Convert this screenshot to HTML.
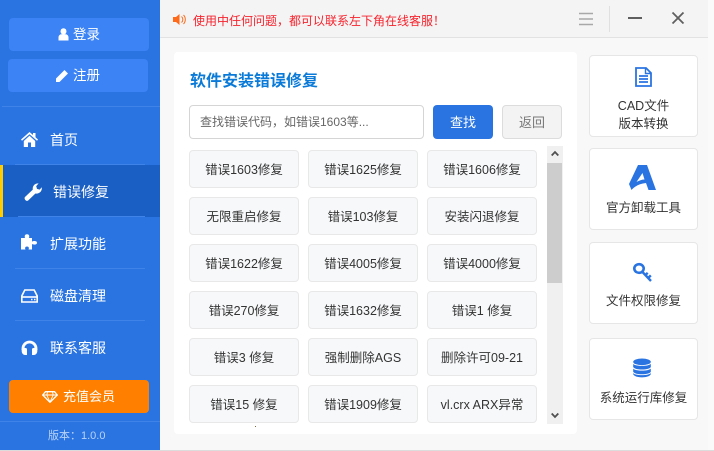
<!DOCTYPE html>
<html lang="zh">
<head>
<meta charset="utf-8">
<style>
*{box-sizing:border-box;margin:0;padding:0}
html,body{width:714px;height:451px;overflow:hidden;background:#f8f8f8;font-family:"Liberation Sans","Noto Sans CJK SC",sans-serif}
.a{position:absolute}
.t{position:absolute;white-space:nowrap;line-height:20px}
#side{left:0;top:0;width:160px;height:451px;background:#2a74e2}
.sb{position:absolute;background:#3c83f6;border-radius:4px;height:33px;width:140px}
.hr{position:absolute;height:1px;background:#3f82e8}
.nav{color:#fff;font-size:14px}
.g{position:absolute;width:110px;height:38px;background:#f7f8fa;border:1px solid #e8e8e8;border-radius:4px;font-size:12.5px;color:#333;text-align:center;line-height:38px;white-space:nowrap}
.c{position:absolute;left:589px;width:109px;height:82px;background:#fff;border:1px solid #e6e6e6;border-radius:4px}
.c div{position:absolute;left:0;width:107px;text-align:center;font-size:12.5px;line-height:17.5px;color:#333;white-space:nowrap}
svg{position:absolute}
</style>
</head>
<body>
<div id="side" class="a"></div>
<div class="sb" style="left:9px;top:18px"></div>
<div class="sb" style="left:8px;top:59px"></div>
<svg style="left:58px;top:28px" width="11" height="13" viewBox="0 0 11 13"><ellipse cx="5.5" cy="3.4" rx="3" ry="3.2" fill="#fff"/><path d="M.5 12.5V9.5C.5 7.5 2 6.5 3 6.3h5c1 .2 2.5 1.2 2.500 3.200v3z" fill="#fff"/></svg>
<div class="t" style="left:73px;top:25px;color:#fff;font-size:13.5px">登录</div>
<svg style="left:56px;top:69px" width="13" height="13" viewBox="0 0 13 13"><path d="M0 13V9.500L8.500 1 12 4.500 3.500 13zM9.300.3l3.400 3.400" fill="#fff"/></svg>
<div class="t" style="left:73px;top:66px;color:#fff;font-size:13.5px">注册</div>
<div class="hr" style="left:2px;top:106px;width:158px"></div>
<svg style="left:21px;top:132px" width="17" height="15" viewBox="0 0 17 15"><path d="M0 7.500L8.500 0 12 3V1h2.500v4.200L17 7.500l-1 1.200L8.500 2.300 1 8.700z" fill="#fff"/><path d="M2.800 9l5.700-5.200L14.200 9v6H10V10.500H7V15H2.800z" fill="#fff"/></svg>
<div class="t nav" style="left:50px;top:130px">首页</div>
<div class="hr" style="left:15px;top:164px;width:130px"></div>
<div class="a" style="left:0;top:165px;width:160px;height:52px;background:#1a5fc4"></div>
<div class="a" style="left:0;top:165px;width:3px;height:52px;background:#ffcc00"></div>
<svg style="left:24px;top:183px" width="18" height="18" viewBox="0 0 17 17"><path d="M.8 13.300L8.300 6.200C7.800 3 10 .2 13.800.3L11.500 3l.8 2.500 2.500.7L16.800 4c.5 3.800-2.300 6.500-6 5.900L3.800 16.700c-1.800 1-4-1.500-3-3.400z" fill="#fff"/></svg>
<div class="t nav" style="left:53px;top:182px">错误修复</div>
<div class="hr" style="left:18px;top:216px;width:127px"></div>
<svg style="left:20px;top:234px" width="18" height="16" viewBox="0 0 18 16"><path d="M1 4h4C4.500 2.500 4.500.3 7 .3S9.500 2.500 9 4H12v3.500c1.500-.8 5-1 5 1.300s-3.500 2-5 1.200V15.500H8.500c.8-1.500.3-3-1.500-3s-2.300 1.500-1.500 3H1z" fill="#fff"/></svg>
<div class="t nav" style="left:50px;top:234px">扩展功能</div>
<div class="hr" style="left:15px;top:268px;width:130px"></div>
<svg style="left:21px;top:289px" width="17" height="14" viewBox="0 0 17 14"><path d="M3.800 1h9.400l3 6v6H.8V7z" fill="none" stroke="#fff" stroke-width="1.600"/><path d="M1 8h15" stroke="#fff" stroke-width="1.600"/><path d="M10 10.500h1.500M13 10.500h1.500" stroke="#fff" stroke-width="1.500"/></svg>
<div class="t nav" style="left:50px;top:286px">磁盘清理</div>
<div class="hr" style="left:15px;top:320px;width:130px"></div>
<svg style="left:21px;top:340px" width="17" height="15" viewBox="0 0 17 15"><path d="M2 10V8.500a6.500 6.500 0 0 1 13 0V10" fill="none" stroke="#fff" stroke-width="2.800"/><path d="M2 8h2.500c1 0 1.500.5 1.500 1.500V15H4C2 15 .7 13 .7 11V9zM15 8h-2.500c-1 0-1.500.5-1.500 1.500V15h2c2 0 3.300-2 3.300-4V9z" fill="#fff"/></svg>
<div class="t nav" style="left:50px;top:338px">联系客服</div>
<div class="a" style="left:9px;top:380px;width:140px;height:33px;background:#ff8000;border-radius:4px"></div>
<svg style="left:42px;top:391px" width="16" height="12" viewBox="0 0 16 12"><path d="M3.500.7h9L15.300 4 8 11.300.7 4z" fill="none" stroke="#fff" stroke-width="1.300"/><path d="M1 4h14M5.500 1L4.800 4 8 11l3.200-7-.7-3" fill="none" stroke="#fff" stroke-width=".9"/></svg>
<div class="t" style="left:63px;top:387px;color:#fff;font-size:13px">充值会员</div>
<div class="hr" style="left:0;top:421px;width:160px"></div>
<div class="t" style="left:48px;top:426px;color:#b9d3f7;font-size:11px">版本：1.0.0</div>

<div class="a" style="left:160px;top:0;width:548px;height:38px;background:#f4f4f4;border-bottom:1px solid #e2e2e2"></div>
<div class="a" style="left:708px;top:0;width:6px;height:451px;background:#fafafa"></div>
<svg style="left:173px;top:13px" width="15" height="13" viewBox="0 0 15 13"><path d="M0 4h3l3.500-3v11L3 9H0z" fill="#ff6a1a"/><path d="M8.500 3.500a4 4 0 0 1 0 6M10.500 2a6.500 6.500 0 0 1 0 9" fill="none" stroke="#ff6a1a" stroke-width="1"/></svg>
<div class="t" style="left:193px;top:11px;color:#f5232d;font-size:12px">使用中任何问题，都可以联系左下角在线客服！</div>
<svg style="left:578px;top:12px" width="16" height="14" viewBox="0 0 16 14"><path d="M1 1.500h14M1 7h14M1 12.500h14" stroke="#a8a8a8" stroke-width="1.600"/></svg>
<div class="a" style="left:609px;top:6px;width:1px;height:26px;background:#e0e0e0"></div>
<div class="a" style="left:628px;top:17px;width:14px;height:2px;background:#5f5f5f"></div>
<svg style="left:671px;top:11px" width="14" height="14" viewBox="0 0 14 14"><path d="M1.500 1.500l11 11M12.500 1.500l-11 11" stroke="#5f5f5f" stroke-width="1.800"/></svg>

<div class="a" style="left:174px;top:52px;width:403px;height:382px;background:#fff;border-radius:4px"></div>
<div class="t" style="left:190px;top:72px;color:#0a7ad8;font-size:16px;font-weight:bold">软件安装错误修复</div>
<div class="a" style="left:189px;top:105px;width:235px;height:34px;background:#fff;border:1px solid #d5d5d5;border-radius:4px"></div>
<div class="t" style="left:200px;top:112px;color:#666;font-size:12px">查找错误代码，如错误1603等...</div>
<div class="a" style="left:433px;top:105px;width:60px;height:34px;background:#2a74e2;border-radius:4px;color:#fff;font-size:13px;text-align:center;line-height:35px">查找</div>
<div class="a" style="left:502px;top:105px;width:60px;height:34px;background:#f3f3f3;border:1px solid #dcdcdc;border-radius:4px;color:#777;font-size:13px;text-align:center;line-height:33px">返回</div>

<div class="g" style="left:189px;top:150px">错误1603修复</div>
<div class="g" style="left:308px;top:150px">错误1625修复</div>
<div class="g" style="left:427px;top:150px">错误1606修复</div>
<div class="g" style="left:189px;top:197px">无限重启修复</div>
<div class="g" style="left:308px;top:197px">错误103修复</div>
<div class="g" style="left:427px;top:197px">安装闪退修复</div>
<div class="g" style="left:189px;top:244px">错误1622修复</div>
<div class="g" style="left:308px;top:244px">错误4005修复</div>
<div class="g" style="left:427px;top:244px">错误4000修复</div>
<div class="g" style="left:189px;top:291px">错误270修复</div>
<div class="g" style="left:308px;top:291px">错误1632修复</div>
<div class="g" style="left:427px;top:291px">错误1 修复</div>
<div class="g" style="left:189px;top:338px">错误3 修复</div>
<div class="g" style="left:308px;top:338px">强制删除AGS</div>
<div class="g" style="left:427px;top:338px">删除许可09-21</div>
<div class="g" style="left:189px;top:385px">错误15 修复</div>
<div class="g" style="left:308px;top:385px">错误1909修复</div>
<div class="g" style="left:427px;top:385px">vl.crx ARX异常</div>
<div class="a" style="left:255px;top:426px;width:1px;height:1px;background:#7a6a40"></div>

<div class="a" style="left:547px;top:146px;width:16px;height:278px;background:#f0f0f0"></div>
<div class="a" style="left:547px;top:163px;width:15px;height:120px;background:#cdcdcd"></div>
<svg style="left:551px;top:150px" width="8" height="7" viewBox="0 0 8 7"><path d="M.7 5.500L4 2l3.300 3.500" fill="none" stroke="#505050" stroke-width="1.800"/></svg>
<svg style="left:551px;top:412px" width="8" height="7" viewBox="0 0 8 7"><path d="M.7 1.500L4 5l3.300-3.500" fill="none" stroke="#505050" stroke-width="1.800"/></svg>

<div class="c" style="top:55px"><div style="top:42px">CAD文件<br>版本转换</div></div>
<svg style="left:635px;top:67px" width="17" height="20" viewBox="0 0 17 20"><path d="M1 1h10l5 5v13H1z" fill="none" stroke="#2a74e2" stroke-width="1.800"/><path d="M10.500 1v5.500H16" fill="none" stroke="#2a74e2" stroke-width="1.400"/><path d="M4 9h9M4 12h9M4 15h9" stroke="#2a74e2" stroke-width="1.700"/></svg>
<div class="c" style="top:148px"><div style="top:51px">官方卸载工具</div></div>
<svg style="left:629px;top:165px" width="27" height="25" viewBox="0 0 27 25"><path fill-rule="evenodd" d="M9 0H18L27 25H19.500L17 18C11 18.500 6 21 2.500 25L0 19ZM13.500 8L7.500 17C10 15.500 13 14.500 15.500 14.500Z" fill="#2a74e2"/></svg>
<div class="c" style="top:242px"><div style="top:50px">文件权限修复</div></div>
<svg style="left:632px;top:262px" width="21" height="21" viewBox="0 0 21 21"><ellipse cx="7" cy="6.500" rx="4.700" ry="4.300" fill="none" stroke="#2a74e2" stroke-width="2.600"/><path d="M10 9.500l9 9.500M16.200 16l2.600-2.600M13.500 13l2.200-2.200" fill="none" stroke="#2a74e2" stroke-width="2.400"/></svg>
<div class="c" style="top:338px"><div style="top:51px">系统运行库修复</div></div>
<svg style="left:633px;top:358px" width="18" height="20" viewBox="0 0 19 20"><ellipse cx="9.500" cy="3.500" rx="9.300" ry="3.500" fill="#2a74e2"/><path d="M.2 5.500c1.500 3 17 3 18.600 0V9c-1.500 3.500-17 3.500-18.600 0zM.2 10.500c1.500 3 17 3 18.600 0V14c-1.500 3.500-17 3.500-18.600 0z" fill="#2a74e2"/><path d="M.2 15.300c1.500 3 17 3 18.600 0v1.200c-1.500 4.500-17 4.500-18.600 0z" fill="#2a74e2"/></svg>

<div class="a" style="left:0;top:450px;width:714px;height:1px;background:#dcdcdc"></div>
</body>
</html>
